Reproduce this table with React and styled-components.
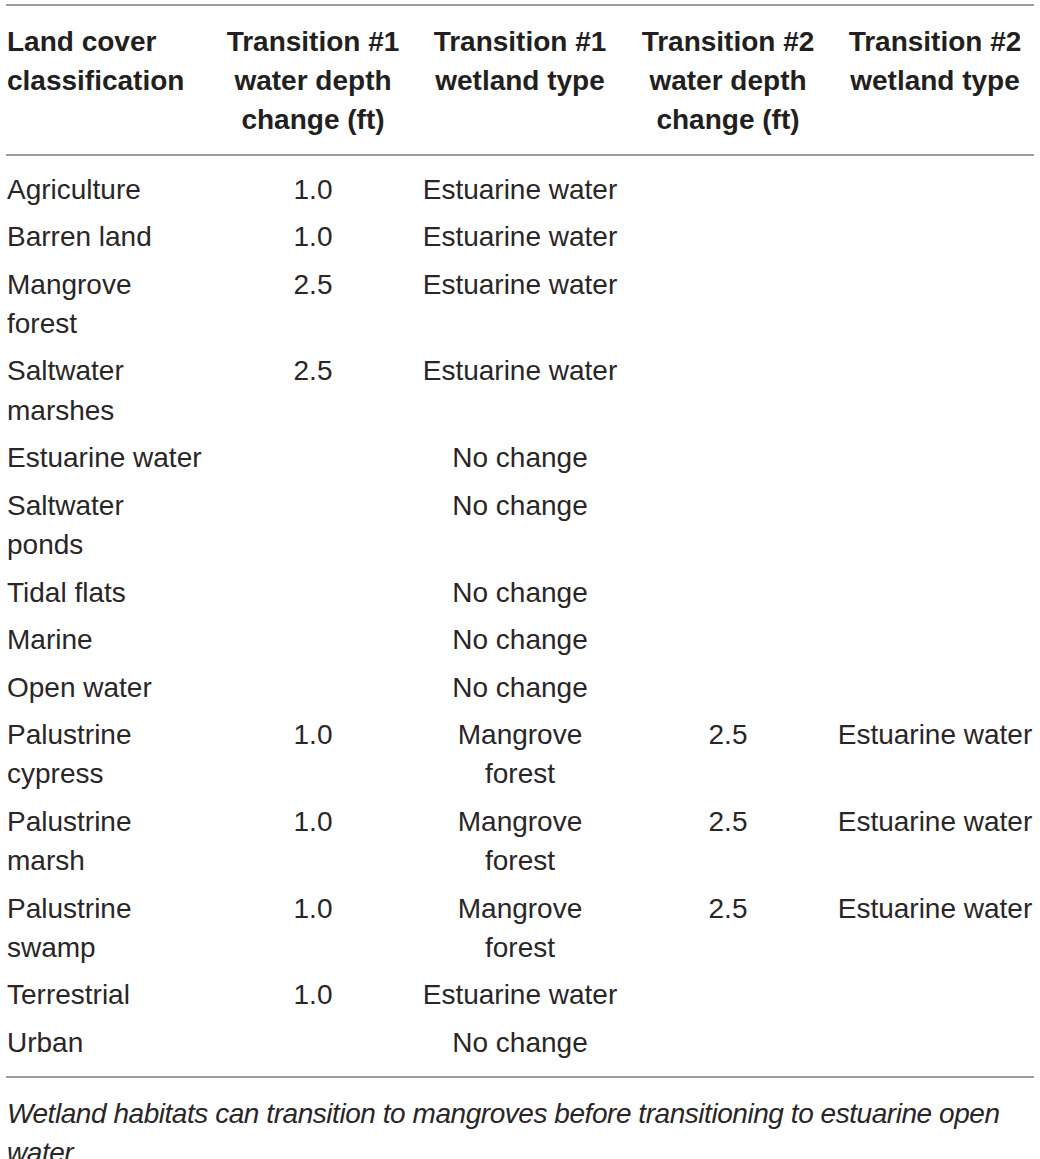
import React from 'react';
import styled, { createGlobalStyle } from 'styled-components';

const GlobalStyle = createGlobalStyle`
  body {
    margin: 0;
    background: #fff;
    font-family: "Liberation Sans", Arial, sans-serif;
    color: #231f20;
  }
`;

const Page = styled.div`
  padding: 4px 6px 0 6px;
  width: 1028px;
`;

const Table = styled.table`
  width: 100%;
  border-collapse: collapse;
  table-layout: fixed;
  font-size: 28px;
  line-height: 1.4;
  border-top: 2px solid #9d9d9d;
  border-bottom: 2px solid #9d9d9d;
`;

const HeadRow = styled.tr`
  border-bottom: 2px solid #9d9d9d;
`;

const HeadCell = styled.th`
  font-weight: 700;
  text-align: ${(p) => p.$align || 'center'};
  vertical-align: top;
  padding: 16px 1px 14px 1px;
  color: #231f20;
`;

const Row = styled.tr`
  &:first-child td {
    padding-top: 14px;
  }
  &:last-child td {
    padding-bottom: 14px;
  }
`;

const Cell = styled.td`
  text-align: ${(p) => p.$align || 'center'};
  vertical-align: top;
  padding: 4.2px 1px;
  color: #2a2627;
`;

const Note = styled.p`
  margin: 16px 0 0 1px;
  font-size: 28px;
  line-height: 1.4;
  font-style: italic;
  letter-spacing: -0.45px;
  color: #2a2627;
`;

const rows = [
  ['Agriculture', '1.0', 'Estuarine water', '', ''],
  ['Barren land', '1.0', 'Estuarine water', '', ''],
  ['Mangrove forest', '2.5', 'Estuarine water', '', ''],
  ['Saltwater marshes', '2.5', 'Estuarine water', '', ''],
  ['Estuarine water', '', 'No change', '', ''],
  ['Saltwater ponds', '', 'No change', '', ''],
  ['Tidal flats', '', 'No change', '', ''],
  ['Marine', '', 'No change', '', ''],
  ['Open water', '', 'No change', '', ''],
  ['Palustrine cypress', '1.0', 'Mangrove forest', '2.5', 'Estuarine water'],
  ['Palustrine marsh', '1.0', 'Mangrove forest', '2.5', 'Estuarine water'],
  ['Palustrine swamp', '1.0', 'Mangrove forest', '2.5', 'Estuarine water'],
  ['Terrestrial', '1.0', 'Estuarine water', '', ''],
  ['Urban', '', 'No change', '', ''],
];

const widths = [200, 214, 200, 216, 198];

export default function App() {
  return (
    <Page>
      <GlobalStyle />
      <Table>
        <colgroup>
          {widths.map((w, i) => (
            <col key={i} style={{ width: w }} />
          ))}
        </colgroup>
        <thead>
          <HeadRow>
            <HeadCell $align="left">Land cover classification</HeadCell>
            <HeadCell>Transition #1 water depth change (ft)</HeadCell>
            <HeadCell>Transition #1 wetland type</HeadCell>
            <HeadCell>Transition #2 water depth change (ft)</HeadCell>
            <HeadCell>Transition #2 wetland type</HeadCell>
          </HeadRow>
        </thead>
        <tbody>
          {rows.map((r, i) => (
            <Row key={i}>
              {r.map((v, j) => (
                <Cell key={j} $align={j === 0 ? 'left' : 'center'}>
                  {v}
                </Cell>
              ))}
            </Row>
          ))}
        </tbody>
      </Table>
      <Note>
        Wetland habitats can transition to mangroves before transitioning to estuarine open water.
      </Note>
    </Page>
  );
}
